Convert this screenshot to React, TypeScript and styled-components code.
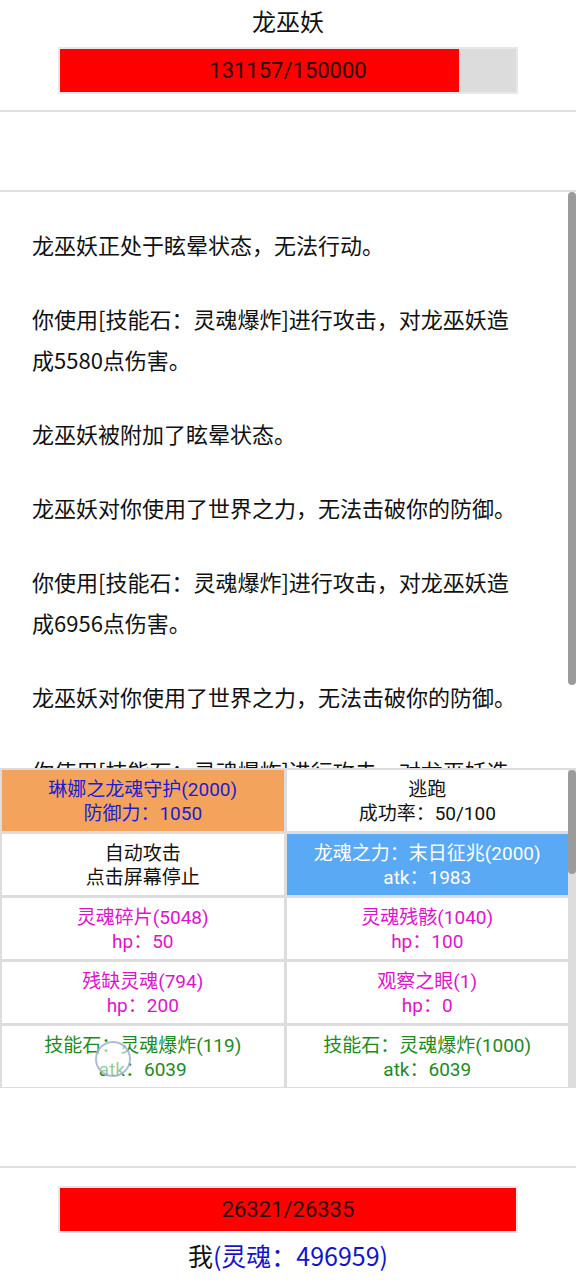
import React from "react";
import styled, { createGlobalStyle } from "styled-components";

const GlobalStyle = createGlobalStyle`
  html, body {
    margin: 0;
    padding: 0;
    background: #ffffff;
  }
  body {
    font-family: Roboto, "Noto Sans CJK SC", "Noto Sans", sans-serif;
    color: #111;
  }
`;

const Page = styled.div`
  position: relative;
  width: 576px;
  height: 1280px;
  display: flex;
  flex-direction: column;
  overflow: hidden;
`;

const Header = styled.div`
  display: flex;
  flex-direction: column;
  align-items: center;
  padding-top: 7px;
  padding-bottom: 16px;
`;

const Title = styled.div`
  font-size: 24px;
  line-height: 32px;
  margin-bottom: 8px;
`;

const BarFrame = styled.div`
  position: relative;
  width: 460px;
  height: 47px;
  box-sizing: border-box;
  border: 2px solid #e8e8e8;
  background: #dcdcdc;
  display: flex;
`;

const BarFill = styled.div`
  height: 100%;
  background: #ff0000;
`;

const BarText = styled.div`
  position: absolute;
  inset: 0;
  display: flex;
  align-items: center;
  justify-content: center;
  font-size: 22px;
  color: #2a0a0a;
`;

const Divider = styled.div`
  height: 2px;
  background: #dedede;
  flex: none;
`;

const Spacer = styled.div<{ $h: number }>`
  height: ${(p) => p.$h}px;
  flex: none;
`;

// scrolling panes: content on the left, a thin scroll track on the right
const Pane = styled.div<{ $h: number; $bg: string }>`
  height: ${(p) => p.$h}px;
  flex: none;
  display: flex;
  background: ${(p) => p.$bg};
  overflow: hidden;
`;

const PaneBody = styled.div`
  flex: 1;
  min-width: 0;
  overflow: hidden;
`;

const ScrollTrack = styled.div<{ $bg: string; $pad: number }>`
  width: 8px;
  flex: none;
  background: ${(p) => p.$bg};
  padding-top: ${(p) => p.$pad}px;
  box-sizing: border-box;
`;

const ScrollThumb = styled.div`
  width: 8px;
  background: #9b9b9b;
  border-radius: 4px;
`;

const LogList = styled.div`
  padding: 32px 38px 32px 32px;
`;

const LogLine = styled.p`
  margin: 0 0 33px 0;
  font-size: 22px;
  line-height: 41px;
  color: #111;
  font-family: "Noto Sans CJK SC", Roboto, sans-serif;

  &:last-child {
    margin-bottom: 0;
  }
`;

const ActionGrid = styled.div`
  display: grid;
  grid-template-columns: 1fr 1fr;
  grid-auto-rows: 61px;
  gap: 3px;
  padding: 2px 0 2px 2px;
`;

type Tone = "plain" | "guard" | "power" | "item" | "skill";

const toneBg: Record<Tone, string> = {
  plain: "#ffffff",
  guard: "#f4a35c",
  power: "#5aa9f4",
  item: "#ffffff",
  skill: "#ffffff",
};

const toneFg: Record<Tone, string> = {
  plain: "#111111",
  guard: "#1c1cd4",
  power: "#ffffff",
  item: "#dd14cc",
  skill: "#1e8a1e",
};

const Cell = styled.div<{ $tone: Tone }>`
  background: ${(p) => toneBg[p.$tone]};
  color: ${(p) => toneFg[p.$tone]};
  display: flex;
  flex-direction: column;
  align-items: center;
  justify-content: center;
  font-size: 19px;
  line-height: 24px;
  padding-top: 2px;
  box-sizing: border-box;
  white-space: nowrap;
`;

const Footer = styled.div`
  display: flex;
  flex-direction: column;
  align-items: center;
  padding-top: 18px;
`;

const PlayerName = styled.div`
  font-size: 25px;
  line-height: 32px;
  margin-top: 6px;
  font-family: "Noto Sans CJK SC", Roboto, sans-serif;
`;

const Soul = styled.span`
  color: #1414cc;
`;

const TouchRing = styled.div`
  position: absolute;
  left: 95px;
  top: 1041px;
  width: 36px;
  height: 36px;
  box-sizing: border-box;
  border-radius: 50%;
  border: 2px solid rgba(150, 165, 205, 0.75);
  background: rgba(255, 255, 255, 0.55);
  pointer-events: none;
`;

const logs = [
  "龙巫妖正处于眩晕状态，无法行动。",
  "你使用[技能石：灵魂爆炸]进行攻击，对龙巫妖造成5580点伤害。",
  "龙巫妖被附加了眩晕状态。",
  "龙巫妖对你使用了世界之力，无法击破你的防御。",
  "你使用[技能石：灵魂爆炸]进行攻击，对龙巫妖造成6956点伤害。",
  "龙巫妖对你使用了世界之力，无法击破你的防御。",
  "你使用[技能石：灵魂爆炸]进行攻击，对龙巫妖造成6039点伤害。",
];

const actions: { tone: Tone; top: string; bottom: string }[] = [
  { tone: "guard", top: "琳娜之龙魂守护(2000)", bottom: "防御力：1050" },
  { tone: "plain", top: "逃跑", bottom: "成功率：50/100" },
  { tone: "plain", top: "自动攻击", bottom: "点击屏幕停止" },
  { tone: "power", top: "龙魂之力：末日征兆(2000)", bottom: "atk：1983" },
  { tone: "item", top: "灵魂碎片(5048)", bottom: "hp：50" },
  { tone: "item", top: "灵魂残骸(1040)", bottom: "hp：100" },
  { tone: "item", top: "残缺灵魂(794)", bottom: "hp：200" },
  { tone: "item", top: "观察之眼(1)", bottom: "hp：0" },
  { tone: "skill", top: "技能石：灵魂爆炸(119)", bottom: "atk：6039" },
  { tone: "skill", top: "技能石：灵魂爆炸(1000)", bottom: "atk：6039" },
];

const HpBar: React.FC<{ cur: number; max: number }> = ({ cur, max }) => (
  <BarFrame>
    <BarFill style={{ width: `${(cur / max) * 100}%` }} />
    <BarText>
      {cur}/{max}
    </BarText>
  </BarFrame>
);

const App: React.FC = () => {
  return (
    <Page>
      <GlobalStyle />
      <Header>
        <Title>龙巫妖</Title>
        <HpBar cur={131157} max={150000} />
      </Header>
      <Divider />
      <Spacer $h={78} />
      <Divider />
      <Pane $h={576} $bg="#ffffff">
        <PaneBody>
          <LogList>
            {logs.map((line, i) => (
              <LogLine key={i}>{line}</LogLine>
            ))}
          </LogList>
        </PaneBody>
        <ScrollTrack $bg="#ffffff" $pad={0}>
          <ScrollThumb style={{ height: 493 }} />
        </ScrollTrack>
      </Pane>
      <Pane $h={320} $bg="#dddddd">
        <PaneBody>
          <ActionGrid>
            {actions.map((a, i) => (
              <Cell key={i} $tone={a.tone}>
                <div>{a.top}</div>
                <div>{a.bottom}</div>
              </Cell>
            ))}
          </ActionGrid>
        </PaneBody>
        <ScrollTrack $bg="#dddddd" $pad={2}>
          <ScrollThumb style={{ height: 104 }} />
        </ScrollTrack>
      </Pane>
      <Spacer $h={78} />
      <Divider />
      <Footer>
        <HpBar cur={26321} max={26335} />
        <PlayerName>
          我<Soul>(灵魂：496959)</Soul>
        </PlayerName>
      </Footer>
      <TouchRing />
    </Page>
  );
};

export default App;
